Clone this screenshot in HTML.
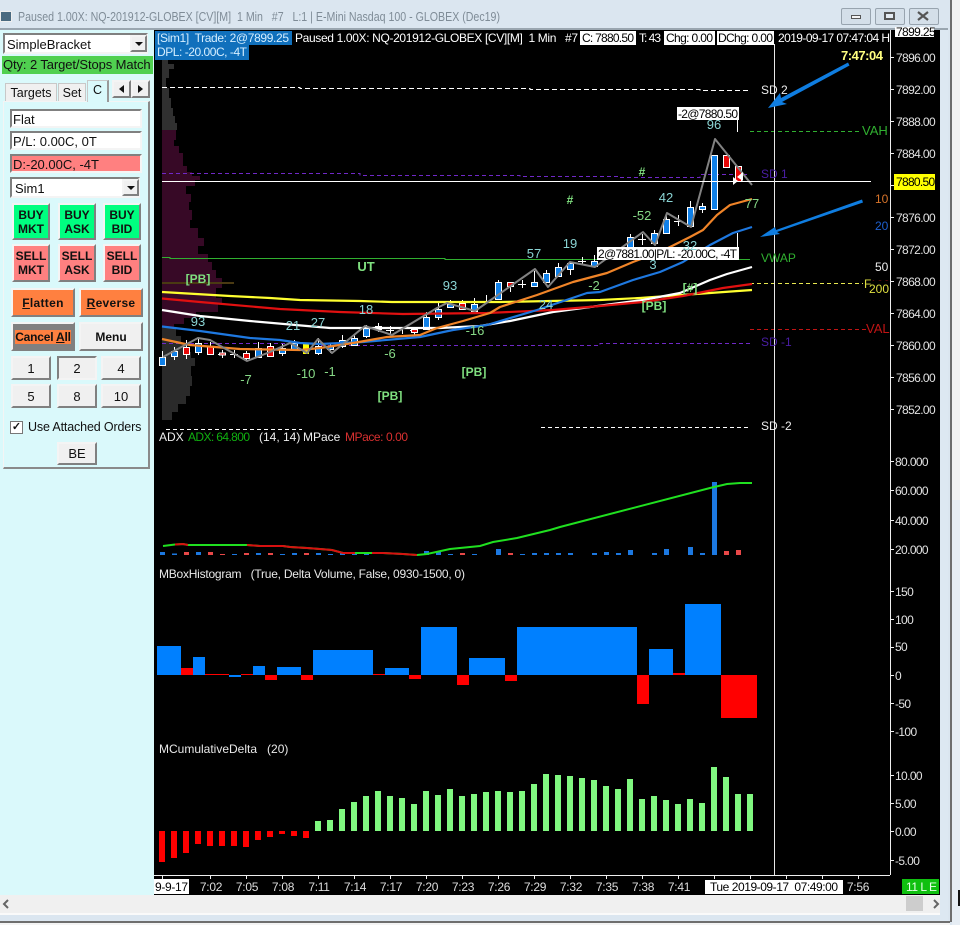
<!DOCTYPE html>
<html><head><meta charset="utf-8"><title>Chart</title>
<style>
html,body{margin:0;padding:0;background:#e9eff5}
#p{position:relative;width:960px;height:925px;overflow:hidden;font-family:"Liberation Sans",sans-serif;font-size:12px;color:#111}
#p div{position:absolute;box-sizing:border-box}
.b{border:2px solid;border-color:#f4f4f4 #808080 #808080 #f4f4f4;background:#f0f0f0;display:flex;align-items:center;justify-content:center;text-align:center;font-size:13px}
.s{border:2px solid;border-color:#808080 #f4f4f4 #f4f4f4 #808080;background:#fff;padding-left:1px;line-height:14px;font-size:13px;white-space:nowrap}
.t{font-weight:bold;font-size:12px;line-height:14px}
.buy{background:#00ff80}.sell{background:#ff8080}.or{background:#ff8040;font-weight:bold;font-size:12px;letter-spacing:.3px}
svg{position:absolute;left:0;top:0}
svg text{font-family:"Liberation Sans",sans-serif;font-size:12px;white-space:pre}
.ax{fill:#e2e2e2;letter-spacing:-.62px}
.te{fill:#8ad4d4;text-anchor:middle;font-size:13px}
.gn{fill:#86d886;text-anchor:middle;font-size:13px}
.pb{fill:#80e080;text-anchor:middle;font-weight:bold;font-size:12px}
.tm{fill:#ddd;text-anchor:middle;letter-spacing:-.3px}
.wh{fill:#eee}
.k{fill:#000}
</style></head><body><div id="p">
<div style="left:0;top:0;width:960px;height:925px;background:#dbe6f0"></div>
<div style="left:951px;top:0;width:9px;height:500px;background:#f3f3f3"></div>
<div style="left:950px;top:0;width:2px;height:922px;background:#6e6e6e"></div>
<div style="left:952px;top:500px;width:8px;height:425px;background:#e6edf4"></div>
<div style="left:958px;top:890px;width:2px;height:16px;background:#111"></div>
<div style="left:0;top:28px;width:948px;height:2px;background:#9aa6b0"></div>
<div style="left:0;top:30px;width:154px;height:865px;background:#daf9fb"></div>
<div style="left:154px;top:30px;width:786px;height:865px;background:#000"></div>
<div style="left:0;top:895px;width:940px;height:18px;background:#f0f0f0"></div>
<div style="left:906px;top:896px;width:17px;height:15px;background:#cdcdcd"></div>
<div style="left:0;top:913px;width:948px;height:2px;background:#fafafa"></div>
<div style="left:940px;top:30px;width:8px;height:891px;background:#dde8f2"></div>
<div style="left:0;top:921px;width:950px;height:2px;background:#6e6e6e"></div>
<div style="left:0;top:923px;width:950px;height:2px;background:#f4f4f4"></div>

<div style="left:0;top:11px;width:12px;height:11px;background:#4a6a80;border:1px solid #eee"></div>
<div style="left:841px;top:8px;width:30px;height:17px;background:#d4dfe9;border:1px solid #98a4af;border-radius:2px"></div>
<div style="left:875px;top:8px;width:30px;height:17px;background:#d4dfe9;border:1px solid #98a4af;border-radius:2px"></div>
<div style="left:909px;top:8px;width:30px;height:17px;background:#d4dfe9;border:1px solid #98a4af;border-radius:2px"></div>
<div style="left:851px;top:15px;width:10px;height:4px;background:#f4f4f4;border:1px solid #555"></div>
<div style="left:884px;top:12px;width:11px;height:8px;border:2px solid #555;background:#e4ebf2"></div>

<div class="s" style="left:3px;top:33px;width:145px;height:21px;padding-top:3px;padding-left:2px;font-size:13px">SimpleBracket</div>
<div class="b" style="left:130px;top:35px;width:17px;height:17px"></div>
<div style="left:2px;top:56px;width:151px;height:18px;background:#50d050;line-height:18px;padding-left:1px;font-size:13px;white-space:nowrap;letter-spacing:-.1px">Qty: 2 Target/Stops Match</div>

<div style="left:3px;top:101px;width:147px;height:368px;border-right:2px solid #8a8a8a;border-bottom:2px solid #8a8a8a;border-left:1px solid #f4f4f4;border-top:1px solid #f4f4f4"></div>
<div style="left:5px;top:83px;width:52px;height:18px;background:#f0f0f0;border:1px solid #c8c8c8;border-bottom:0;text-align:center;line-height:18px;font-size:12.5px">Targets</div>
<div style="left:58px;top:83px;width:28px;height:18px;background:#f0f0f0;border:1px solid #c8c8c8;border-bottom:0;text-align:center;line-height:18px;font-size:12.5px">Set</div>
<div style="left:87px;top:80px;width:22px;height:22px;background:#daf9fb;border:1px solid #c8c8c8;border-right:2px solid #999;border-bottom:0;text-align:center;line-height:18px;font-size:12.5px">C</div>
<div class="b" style="left:112px;top:80px;width:19px;height:18px"></div>
<div class="b" style="left:131px;top:80px;width:19px;height:18px"></div>

<div class="s" style="left:10px;top:109px;width:132px;height:19px;padding-top:2px">Flat</div>
<div class="s" style="left:10px;top:131px;width:132px;height:19px;padding-top:2px">P/L: 0.00C, 0T</div>
<div class="s" style="left:10px;top:154px;width:132px;height:19px;padding-top:2px;background:#ff8080">D:-20.00C, -4T</div>
<div class="s" style="left:10px;top:177px;width:130px;height:21px;padding-top:3px;padding-left:3px">Sim1</div>
<div class="b" style="left:122px;top:179px;width:17px;height:17px"></div>

<div class="b buy t" style="left:12px;top:203px;width:38px;height:37px">BUY<br>MKT</div>
<div class="b buy t" style="left:58px;top:203px;width:38px;height:37px">BUY<br>ASK</div>
<div class="b buy t" style="left:103px;top:203px;width:38px;height:37px">BUY<br>BID</div>
<div class="b sell t" style="left:12px;top:244px;width:38px;height:38px">SELL<br>MKT</div>
<div class="b sell t" style="left:58px;top:244px;width:38px;height:38px">SELL<br>ASK</div>
<div class="b sell t" style="left:103px;top:244px;width:38px;height:38px">SELL<br>BID</div>
<div class="b or" style="left:11px;top:288px;width:64px;height:29px"><span><u>F</u>latten</span></div>
<div class="b or" style="left:79px;top:288px;width:64px;height:29px"><span><u>R</u>everse</span></div>
<div class="b" style="left:11px;top:322px;width:64px;height:29px;background:#808080;font-weight:bold;font-size:12px"><span style="background:#ff8040;letter-spacing:-.2px;padding:0">Cancel <u>A</u>ll</span></div>
<div class="b" style="left:79px;top:322px;width:64px;height:29px;font-weight:bold;font-size:12px">Menu</div>
<div class="b" style="left:11px;top:356px;width:40px;height:24px">1</div>
<div class="b" style="left:57px;top:356px;width:40px;height:24px;border-color:#808080 #f4f4f4 #f4f4f4 #808080">2</div>
<div class="b" style="left:101px;top:356px;width:40px;height:24px">4</div>
<div class="b" style="left:11px;top:384px;width:40px;height:24px">5</div>
<div class="b" style="left:57px;top:384px;width:40px;height:24px">8</div>
<div class="b" style="left:101px;top:384px;width:40px;height:24px">10</div>
<div style="left:10px;top:421px;width:13px;height:13px;background:#fff;border:1px solid #777;text-align:center;line-height:11px;font-size:11px;font-weight:bold">&#10003;</div>
<div style="left:28px;top:420px;font-size:12.5px;white-space:nowrap;letter-spacing:-.15px">Use Attached Orders</div>
<div class="b" style="left:57px;top:442px;width:40px;height:23px">BE</div>

<svg width="960" height="925" viewBox="0 0 960 925">
<text x="18" y="21" fill="#7f8c97" style="font-size:13px" xml:space="preserve" textLength="482" lengthAdjust="spacingAndGlyphs">Paused 1.00X: NQ-201912-GLOBEX [CV][M]  1 Min   #7   L:1 | E-Mini Nasdaq 100 - GLOBEX (Dec19)</text>
<!-- window icons -->
<path d="M918 12l10 8M928 12l-10 8" stroke="#555" stroke-width="2.2" fill="none"/>
<path d="M135 42h8l-4 4z" fill="#111"/><path d="M127 186h8l-4 4z" fill="#111"/>
<path d="M124 85v8l-5-4z" fill="#111"/><path d="M138 85v8l5-4z" fill="#111"/>
<path d="M8 900l-4 4 4 4M934 900l4 4-4 4" stroke="#666" stroke-width="2" fill="none"/>

<!-- volume profile -->
<polygon fill="#303030" points="162,60 168,60 168,64 174,64 174,69 169,69 169,78 166,78 166,88 169,88 169,98 171,98 171,108 173,108 173,116 175,116 175,123 177,123 177,130 180,130 180,130 162,130"/>
<polygon fill="#370926" points="162,130 176,130 176,140 174,140 174,146 179,146 179,153 183,153 183,160 183,166 187,166 187,172 192,172 192,176 200,176 200,180 195,180 195,186 186,186 186,194 191,194 191,202 189,202 189,210 192,210 192,220 190,220 190,228 198,228 198,238 204,238 204,246 198,246 198,254 208,254 208,262 212,262 212,270 216,270 216,278 222,278 222,288 216,288 216,298 222,298 222,304 218,304 218,312 196,312 196,318 184,318 184,324 174,324 174,328 162,328"/>
<polygon fill="#2a2a2a" points="162,328 176,328 176,336 181,336 181,344 186,344 186,352 191,352 191,358 195,358 195,366 191,366 191,376 192,376 192,386 190,386 190,396 186,396 186,404 178,404 178,412 172,412 172,420 166,420 166,420 162,420"/>
<rect x="162" y="282" width="72" height="2" fill="#4a3a12"/>

<!-- level lines -->
<path d="M162 87.5H300V88.5H530V89.5H700V90.5H750" stroke="#fff" stroke-dasharray="5 3" fill="none"/>
<path d="M166 429.5H302M541 427.5H750" stroke="#fff" stroke-dasharray="4 3" fill="none"/>
<path d="M162 173.5H360V175.5H520V176.5H620V177.5H700V174.5H750" stroke="#7028c8" stroke-dasharray="4 3" fill="none"/>
<path d="M162 343.5H320V345.5H600V343.5H750" stroke="#7028c8" stroke-dasharray="4 3" fill="none"/>
<path d="M750 131.5H862" stroke="#30b030" stroke-dasharray="4 3" fill="none"/>
<path d="M750 329.5H866" stroke="#c01414" stroke-dasharray="4 3" fill="none"/>
<path d="M750 283.5H863" stroke="#e8e850" stroke-dasharray="4 3" fill="none"/>
<path d="M162 257.5H170V258.5H445V259.5H750" stroke="#30b030" fill="none"/>

<!-- candles: wicks -->
<path stroke="#fff" fill="none" d="M162.5 351V366M174.5 347V360M186.5 340V359M198.5 338V355M210.5 342V354M222.5 350V358M234.5 350V358M246.5 351V360M258.5 342V357M270.5 343V357M282.5 344V356M294.5 340V350M330.5 344V353M318.5 338V355M342.5 335V348M354.5 335V346M366.5 325V338M378.5 323V332M390.5 326V335M402.5 328V334M414.5 327V336M426.5 312V330M438.5 303V320M450.5 300V308M462.5 300V310M474.5 298V312M486.5 295V302M498.5 280V300M510.5 282V292M522.5 280V288M534.5 271V286M546.5 270V282M558.5 263V277M570.5 262V275M582.5 257V264M594.5 255V267M630.5 234V248M642.5 234V245M654.5 230V244M666.5 216V234M678.5 215V226M690.5 201V227M702.5 203V213"/>
<path stroke="#fff" fill="none" d="M218 354.5h8M230 354.5h8M386 330.5h8M410 330.5h8M518 284.5h8M578 261.5h8M638 239.5h8M674 221.5h8"/>
<!-- blue bodies -->
<path fill="#1080e8" stroke="#fff" d="M159.5 357.5h6v8h-6zM171.5 351.5h6v5h-6zM195.5 343.5h6v9h-6zM255.5 348.5h6v9h-6zM279.5 348.5h6v5h-6zM291.5 343.5h6v6h-6zM315.5 346.5h6v7h-6zM327.5 346.5h6v3h-6zM339.5 340.5h6v6h-6zM351.5 338.5h6v7h-6zM363.5 328.5h6v8h-6zM423.5 317.5h6v12h-6zM435.5 309.5h6v8h-6zM447.5 304.5h6v3h-6zM471.5 304.5h6v7h-6zM495.5 282.5h6v17h-6zM531.5 282.5h6v4h-6zM543.5 273.5h6v9h-6zM555.5 267.5h6v9h-6zM567.5 263.5h6v6h-6zM591.5 261.5h6v5h-6zM627.5 237.5h6v10h-6zM651.5 233.5h6v10h-6zM663.5 219.5h6v14h-6zM687.5 207.5h6v19h-6zM699.5 206.5h6v3h-6zM711.5 155.5h6v54h-6z"/>
<!-- red bodies -->
<path fill="#e80808" stroke="#fff" d="M183.5 347.5h6v7h-6zM207.5 346.5h6v8h-6zM219.5 353h6v2h-6zM243.5 353.5h6v5h-6zM267.5 346.5h6v10h-6zM375.5 326.5h6v3h-6zM411.5 329.5h6v3h-6zM459.5 303.5h6v6h-6zM507.5 282.5h6v4h-6zM723.5 155.5h6v12h-6zM735.5 166.5h6v15h-6z"/>
<rect x="303" y="343" width="6" height="11" fill="#ffff00"/>

<!-- averages -->
<g fill="none" stroke-linejoin="round">
<polyline stroke="#ffff30" stroke-width="2.2" points="162,292 230,296 270,298 300,300 360,301 392,302 500,302 600,300 640,298 710,293 752,290"/>
<polyline stroke="#fff" stroke-width="2.2" points="162,310 200,316 250,321 330,328 440,328 480,326 510,321 553,312 620,303 643,300 680,293 710,280 727,274 752,267"/>
<polyline stroke="#e01010" stroke-width="2.2" points="162,298.5 200,302 280,309 340,312 403,314 487,313 553,310 600,306 643,302 683,296 723,288 752,284"/>
<polyline stroke="#1e78e0" stroke-width="2.2" points="162,326.5 200,331 250,338 280,340 300,343 320,344 363,342 420,337 453,330 487,325 537,310 587,293 600,292 633,280 660,272 683,262 710,245 733,233 752,227"/>
<polyline stroke="#f08428" stroke-width="2.2" points="162,339 190,345 215,347 240,349 300,350 320,348 353,343 387,337 420,335 437,328 463,321 490,313 500,307 537,295 573,282 607,273 633,262 660,252 690,237 703,230 717,215 730,205 752,199"/>
<polyline stroke="#828282" stroke-width="2" points="163,357 198,338 210,340 247,361 270,352 290,343 307,353 318,339 332,353 365,326 392,335 437,308 447,303 475,311 535,269 548,287 570,262 595,267 643,232 655,245 667,213 691,227 715,139 752,185"/>
</g>
<path d="M733 177l5 4-5 4zM743 172v9l-6-4z" fill="#fff"/>

<!-- crosshair and axes -->
<path d="M162 181.5H871" stroke="#fff" fill="none"/>
<path d="M774.5 44V875" stroke="#e8e8e8" fill="none"/>
<path d="M890.5 30V875M154 875.5H890" stroke="#eee" fill="none"/>
<path stroke="#eee" fill="none" d="M890 57.5h4M890 89.5h4M890 121.5h4M890 153.5h4M890 185.5h4M890 217.5h4M890 249.5h4M890 281.5h4M890 313.5h4M890 345.5h4M890 377.5h4M890 409.5h4M890 461.5h4M890 490.5h4M890 520.5h4M890 549.5h4M890 591.5h4M890 619.5h4M890 647.5h4M890 675.5h4M890 703.5h4M890 731.5h4M890 775.5h4M890 803.5h4M890 831.5h4M890 860.5h4M162.5 875v4M210.5 875v4M246.5 875v4M282.5 875v4M318.5 875v4M354.5 875v4M390.5 875v4M426.5 875v4M462.5 875v4M498.5 875v4M534.5 875v4M570.5 875v4M606.5 875v4M642.5 875v4M678.5 875v4M714.5 875v4M750.5 875v4M786.5 875v4M822.5 875v4M858.5 875v4"/>

<!-- arrows -->
<g fill="#0f7de0">
<path d="M848 62.5l1.5 3L782 102l5 2-19 4 12-15 1 5z"/>
<path d="M862 199.5l1 3L777 232l3 2-20 3 15-10 1 3z"/>
</g>

<!-- trade boxes -->
<rect x="677" y="107" width="62" height="13" fill="#fff"/>
<path d="M737.5 120V132M737.5 233V247" stroke="#fff" fill="none"/>
<text x="678" y="118" class="k" textLength="60" lengthAdjust="spacing">-2@7880.50</text>
<text class="te" x="714" y="129">96</text>
<rect x="597" y="247" width="142" height="13" fill="#fff"/>
<text x="598" y="258" class="k" textLength="139" lengthAdjust="spacing">2@7881.00|P/L: -20.00C, -4T</text>

<!-- chart labels -->
<text class="te" x="198" y="326">93</text><text class="te" x="293" y="330">21</text><text class="te" x="318" y="327">27</text><text class="te" x="366" y="314">18</text><text class="te" x="450" y="290">93</text><text class="te" x="534" y="258">57</text><text class="te" x="570" y="248">19</text><text class="te" x="666" y="202">42</text><text class="te" x="690" y="250">32</text><text class="te" x="546" y="309">24</text><text class="te" x="653" y="269">3</text>
<text class="gn" x="246" y="384">-7</text><text class="gn" x="306" y="378">-10</text><text class="gn" x="330" y="376">-1</text><text class="gn" x="390" y="358">-6</text><text class="gn" x="475" y="335">-16</text><text class="gn" x="594" y="290">-2</text><text class="gn" x="642" y="220">-52</text><text class="gn" x="752" y="208">77</text>
<text class="pb" x="198" y="283">[PB]</text><text class="pb" x="654" y="310">[PB]</text><text class="pb" x="474" y="376">[PB]</text><text class="pb" x="390" y="400">[PB]</text><text class="pb" x="690" y="292">[#]</text><text class="pb" x="642" y="176">#</text><text class="pb" x="570" y="204">#</text><text class="pb" x="366" y="271" style="font-size:13px">UT</text>
<text x="761" y="94" class="wh">SD 2</text><text x="761" y="178" fill="#4a1ea6">SD 1</text><text x="761" y="346" fill="#4a1ea6">SD -1</text><text x="761" y="430" class="wh">SD -2</text>
<text x="761" y="262" fill="#30b030">VWAP</text><text x="862" y="135" fill="#30b030" style="font-size:13px">VAH</text><text x="866" y="333" fill="#c01414" style="font-size:13px">VAL</text>
<text x="870" y="289" fill="#b01414">100</text><rect x="868" y="281" width="22" height="15" fill="#000"/>
<text x="864" y="288" fill="#e0e040">F</text><text x="869" y="293" fill="#e0e040">200</text>
<text x="875" y="203" fill="#d8742a">10</text><text x="875" y="230" fill="#1e60d0">20</text><text x="875" y="271" fill="#eee">50</text>

<!-- header -->
<rect x="155" y="31" width="137" height="14" fill="#1070bc"/><rect x="155" y="45" width="94" height="15" fill="#1070bc"/>
<text x="157" y="42" fill="#d4eeff" xml:space="preserve" textLength="132" lengthAdjust="spacing">[Sim1]  Trade: 2@7899.25</text>
<text x="157" y="56" fill="#d4eeff" textLength="90" lengthAdjust="spacing">DPL: -20.00C, -4T</text>
<text x="295" y="42" fill="#fff" xml:space="preserve" textLength="283" lengthAdjust="spacing">Paused 1.00X: NQ-201912-GLOBEX [CV][M]  1 Min   #7</text>
<rect x="580" y="31" width="56" height="14" fill="#fff"/><text x="582" y="42" class="k" textLength="52" lengthAdjust="spacing">C: 7880.50</text>
<text x="639" y="42" fill="#fff" textLength="22" lengthAdjust="spacing">T: 43</text>
<rect x="664" y="31" width="51" height="14" fill="#fff"/><text x="666" y="42" class="k" textLength="47" lengthAdjust="spacing">Chg: 0.00</text>
<rect x="717" y="31" width="57" height="14" fill="#fff"/><text x="718" y="42" class="k" textLength="55" lengthAdjust="spacing">DChg: 0.00</text>
<text x="778" y="42" fill="#fff" textLength="112" lengthAdjust="spacing">2019-09-17 07:47:04 H</text>
<text x="841" y="60" fill="#ffff80" style="font-weight:bold;font-size:13px" textLength="42" lengthAdjust="spacing">7:47:04</text>

<!-- price axis -->
<rect x="895" y="27" width="39" height="10" fill="#fff"/><text x="896" y="36" class="k" style="letter-spacing:-.62px">7899.25</text>
<rect x="894" y="174" width="41" height="16" fill="#ffff00"/><text x="896" y="186" class="k" style="letter-spacing:-.7px">7880.50</text>
<text class="ax" x="896" y="62">7896.00</text><text class="ax" x="896" y="94">7892.00</text><text class="ax" x="896" y="126">7888.00</text><text class="ax" x="896" y="158">7884.00</text><text class="ax" x="896" y="222">7876.00</text><text class="ax" x="896" y="254">7872.00</text><text class="ax" x="896" y="286">7868.00</text><text class="ax" x="896" y="318">7864.00</text><text class="ax" x="896" y="350">7860.00</text><text class="ax" x="896" y="382">7856.00</text><text class="ax" x="896" y="414">7852.00</text>
<text class="ax" x="895" y="466">80.000</text><text class="ax" x="895" y="495">60.000</text><text class="ax" x="895" y="525">40.000</text><text class="ax" x="895" y="554">20.000</text>
<text class="ax" x="895" y="596">150</text><text class="ax" x="895" y="624">100</text><text class="ax" x="895" y="651">50</text><text class="ax" x="895" y="680">0</text><text class="ax" x="895" y="708">-50</text><text class="ax" x="895" y="736">-100</text>
<text class="ax" x="895" y="780">10.00</text><text class="ax" x="895" y="808">5.00</text><text class="ax" x="895" y="836">0.00</text><text class="ax" x="895" y="865">-5.00</text>

<!-- ADX panel -->
<text x="159" y="441" fill="#eee">ADX</text><text x="188" y="441" fill="#10b010" textLength="62" lengthAdjust="spacing">ADX: 64.800</text><text x="259" y="441" fill="#eee">(14, 14)</text><text x="303" y="441" fill="#eee">MPace</text><text x="345" y="441" fill="#d83030" textLength="63" lengthAdjust="spacing">MPace: 0.00</text>
<path fill="#1c78e0" d="M160 552h5v3h-5zM172 553.5h5v1.5h-5zM196 552h5v3h-5zM232 554h5v1h-5zM256 553h5v2h-5zM280 554h5v1h-5zM292 553h5v2h-5zM316 553h5v2h-5zM328 554h5v1h-5zM340 553h5v2h-5zM352 553h5v2h-5zM364 553h5v2h-5zM424 551h5v4h-5zM436 552h5v3h-5zM448 554h5v1h-5zM472 554h5v1h-5zM496 549h5v6h-5zM520 554h5v1h-5zM532 553h5v2h-5zM544 553h5v2h-5zM556 553h5v2h-5zM568 553h5v2h-5zM592 553h5v2h-5zM604 552h5v3h-5zM616 553h5v2h-5zM628 550h5v5h-5zM652 553h5v2h-5zM664 549h5v6h-5zM688 547h5v8h-5zM700 553h5v2h-5zM712 482h5v73h-5z"/>
<path fill="#e84848" d="M184 552h5v3h-5zM208 552h5v3h-5zM220 554h5v1h-5zM244 553h5v2h-5zM268 553h5v2h-5zM304 553h5v2h-5zM460 553h5v2h-5zM508 553h5v2h-5zM724 551h5v4h-5zM736 550h5v5h-5z"/>
<polyline fill="none" stroke="#20e020" stroke-width="2" points="163,546 175,544.5 183,544 188,545 247,545 260,546 283,546 290,547 307,548 320,549 332,550 343,553 357,553 372,553 383,553 403,554 417,555 427,554 450,549 480,546 493,542 517,538 550,530 560,527 710,488 727,484 740,483 752,483"/>
<polyline fill="none" stroke="#d81010" stroke-width="2" points="175,544.5 183,544 188,545"/>
<polyline fill="none" stroke="#d81010" stroke-width="2" points="247,545 260,546 283,546 290,547 307,548 320,549 332,550 343,553 355,553"/>
<polyline fill="none" stroke="#d81010" stroke-width="2" points="372,553 383,553 403,554 417,555"/>

<!-- box histogram -->
<text x="159" y="578" fill="#e8e8e8" xml:space="preserve" textLength="306" lengthAdjust="spacing">MBoxHistogram   (True, Delta Volume, False, 0930-1500, 0)</text>
<path fill="#0080ff" d="M157 646h24v29h-24zM193 657h12v18h-12zM229 675h12v2h-12zM253 666h12v9h-12zM277 667h24v8h-24zM313 650h60v25h-60zM385 668h24v7h-24zM421 627h36v48h-36zM469 658h36v17h-36zM517 627h120v48H517zM649 649h24v26h-24zM685 604h36v71h-36z"/>
<path fill="#ff0000" d="M181 668h12v7h-12zM205 674h24v1h-24zM241 674h12v1h-12zM265 675h12v5h-12zM301 675h12v5h-12zM373 674h12v1h-12zM409 675h12v4h-12zM457 675h12v10h-12zM505 675h12v6h-12zM637 675h12v29h-12zM673 673h12v2h-12zM721 675h36v43h-36z"/>

<!-- cumulative delta -->
<text x="159" y="753" fill="#e8e8e8" xml:space="preserve">MCumulativeDelta   (20)</text>
<path fill="#ff0000" d="M159 831h6v31h-6zM171 831h6v27h-6zM183 831h6v22h-6zM195 831h6v13h-6zM207 831h6v15h-6zM219 831h6v15h-6zM231 831h6v15h-6zM243 831h6v16h-6zM255 831h6v9h-6zM267 831h6v6h-6zM279 831h6v3h-6zM291 831h6v5h-6zM303 831h6v7h-6z"/>
<path fill="#80f880" d="M315 821h6v10h-6zM327 820h6v11h-6zM339 809h6v22h-6zM351 802h6v29h-6zM363 796h6v35h-6zM375 791h6v40h-6zM387 796h6v35h-6zM399 798h6v33h-6zM411 804h6v27h-6zM423 791h6v40h-6zM435 795h6v36h-6zM447 789h6v42h-6zM459 796h6v35h-6zM471 794h6v37h-6zM483 792h6v39h-6zM495 791h6v40h-6zM507 792h6v39h-6zM519 791h6v40h-6zM531 784h6v47h-6zM543 774h6v57h-6zM555 775h6v56h-6zM567 776h6v55h-6zM579 778h6v53h-6zM591 780h6v51h-6zM603 786h6v45h-6zM615 789h6v42h-6zM627 779h6v52h-6zM639 799h6v32h-6zM651 796h6v35h-6zM663 800h6v31h-6zM675 804h6v27h-6zM687 799h6v32h-6zM699 803h6v28h-6zM711 767h6v64h-6zM723 777h6v54h-6zM735 794h6v37h-6zM747 794h6v37h-6z"/>

<!-- time axis -->
<rect x="154" y="879" width="35" height="15" fill="#fff"/><text x="155" y="891" class="k" textLength="33" lengthAdjust="spacing">9-9-17</text>
<text class="tm" x="211" y="891">7:02</text><text class="tm" x="247" y="891">7:05</text><text class="tm" x="283" y="891">7:08</text><text class="tm" x="319" y="891">7:11</text><text class="tm" x="355" y="891">7:14</text><text class="tm" x="391" y="891">7:17</text><text class="tm" x="427" y="891">7:20</text><text class="tm" x="463" y="891">7:23</text><text class="tm" x="499" y="891">7:26</text><text class="tm" x="535" y="891">7:29</text><text class="tm" x="571" y="891">7:32</text><text class="tm" x="607" y="891">7:35</text><text class="tm" x="643" y="891">7:38</text><text class="tm" x="679" y="891">7:41</text><text class="tm" x="858" y="891">7:56</text>
<rect x="705" y="880" width="138" height="14" fill="#fff"/><text x="710" y="891" class="k" xml:space="preserve" textLength="128" lengthAdjust="spacing">Tue 2019-09-17  07:49:00</text>
<rect x="902" y="879" width="37" height="15" fill="#10c010"/><text x="906" y="891" fill="#e8ffe8" xml:space="preserve" textLength="31" lengthAdjust="spacing">11 L E</text>
</svg>
</div></body></html>
